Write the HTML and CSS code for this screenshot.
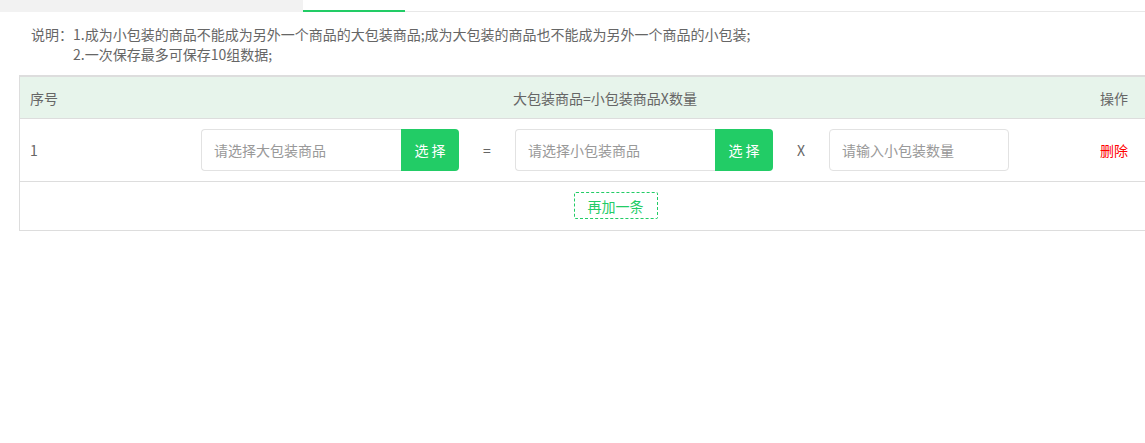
FILE: index.html
```html
<!DOCTYPE html>
<html lang="zh-CN">
<head>
<meta charset="utf-8">
<title>包装设置</title>
<link rel="stylesheet" href="styles.css">
</head>
<body>
<div class="page">
  <div class="tabs">
    <div class="tab tab-inactive"></div>
    <div class="tab tab-active"></div>
    <div class="tab-rest"></div>
  </div>
  <div class="notes">
    <div class="notes-label">说明：</div>
    <div class="notes-lines">
      <div>1.成为小包装的商品不能成为另外一个商品的大包装商品;成为大包装的商品也不能成为另外一个商品的小包装;</div>
      <div>2.一次保存最多可保存10组数据;</div>
    </div>
  </div>
  <div class="table">
    <div class="trow thead">
      <div class="cell cell-no">序号</div>
      <div class="cell cell-main center">大包装商品=小包装商品X数量</div>
      <div class="cell cell-op">操作</div>
    </div>
    <div class="trow tbody">
      <div class="cell cell-no">1</div>
      <div class="cell cell-main center">
        <div class="group">
          <div class="picker">
            <input class="field field-pick" type="text" placeholder="请选择大包装商品">
            <button class="pick-btn">选 择</button>
          </div>
          <span class="sep">=</span>
          <div class="picker">
            <input class="field field-pick" type="text" placeholder="请选择小包装商品">
            <button class="pick-btn">选 择</button>
          </div>
          <span class="sep">X</span>
          <input class="field field-num" type="text" placeholder="请输入小包装数量">
        </div>
      </div>
      <div class="cell cell-op"><a class="del">删除</a></div>
    </div>
    <div class="add-row">
      <button class="add-btn">再加一条</button>
    </div>
  </div>
</div>
</body>
</html>
```

FILE: styles.css
```css
html, body {
  margin: 0;
  padding: 0;
  background: #fff;
}
body {
  font-family: "Noto Sans CJK SC", "Liberation Sans", sans-serif;
  font-size: 14px;
  color: #666;
}
.page {
  width: 1145px;
  height: 443px;
  overflow: hidden;
}
.tabs {
  display: flex;
  height: 12px;
}
.tab-inactive {
  width: 303px;
  background: #f2f2f2;
}
.tab-active {
  width: 102px;
  box-sizing: border-box;
  border-bottom: 2px solid #22cc66;
}
.tab-rest {
  flex: 1;
  box-sizing: border-box;
  border-bottom: 1px solid #e8e8e8;
}
.notes {
  display: flex;
  margin: 12px 0 0 31px;
  line-height: 20px;
  font-size: 14px;
}
.notes-label {
  width: 42px;
}
.table {
  margin: 11px 0 0 19px;
  width: 1191px;
  border-left: 1px solid #ddd;
  border-top: 2px solid #ddd;
}
.trow {
  display: grid;
  grid-template-columns: 100px 1fr 121px;
  border-bottom: 1px solid #ddd;
}
.thead {
  height: 41px;
  background: #e7f4eb;
}
.tbody {
  height: 62px;
}
.cell {
  display: flex;
  align-items: center;
  padding-left: 10px;
}
.cell.center {
  justify-content: center;
  padding-left: 0;
}
.group {
  display: flex;
  align-items: center;
}
.picker {
  display: flex;
  height: 42px;
}
.field {
  box-sizing: border-box;
  height: 42px;
  border: 1px solid #e2e2e2;
  padding: 0 12px;
  font: inherit;
  font-size: 14px;
  color: #333;
  outline: none;
  background: #fff;
}
.field::placeholder {
  color: #999;
}
.field-pick {
  width: 200px;
  border-radius: 4px 0 0 4px;
  border-right: none;
}
.field-num {
  width: 180px;
  border-radius: 4px;
}
.pick-btn {
  width: 58px;
  height: 42px;
  border: none;
  border-radius: 0 4px 4px 0;
  background: #22cc66;
  color: #fff;
  font: inherit;
  font-size: 14px;
  padding: 0;
}
.sep {
  width: 56px;
  text-align: center;
  color: #666;
}
.del {
  color: #ff0000;
  cursor: pointer;
}
.add-row {
  height: 48px;
  border-bottom: 1px solid #ddd;
  display: flex;
  justify-content: center;
  align-items: flex-start;
}
.add-btn {
  margin-top: 10px;
  width: 84px;
  height: 27px;
  box-sizing: border-box;
  border: 1px dashed #22cc66;
  border-radius: 2px;
  background: #fff;
  color: #22cc66;
  font: inherit;
  font-size: 14px;
  padding: 0;
}
```
